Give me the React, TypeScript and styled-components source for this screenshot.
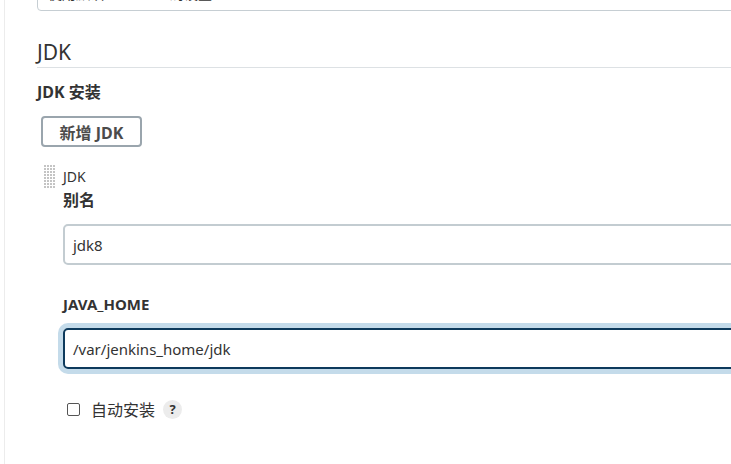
import React from "react";
import styled, { createGlobalStyle } from "styled-components";

const Global = createGlobalStyle`
  html, body { margin: 0; padding: 0; background: #fff; overflow: hidden; }
  body { font-family: "Noto Sans", "Noto Sans CJK SC", sans-serif; color: #333; }
`;

const Page = styled.div`
  width: 731px;
  height: 464px;
  overflow: hidden;
  padding-left: 4px;
  box-sizing: border-box;
`;

const Panel = styled.div`
  border-left: 1px solid #ececec;
  height: 520px;
  padding-left: 32px;
  width: 780px;
  box-sizing: border-box;
  margin-top: -29px;
`;

const TopSelect = styled.div`
  height: 40px;
  box-sizing: border-box;
  border: 1px solid #c6ced3;
  border-radius: 4px;
  padding: 0 10px;
  display: flex;
  align-items: center;
  font-size: 14px;
  line-height: 20px;
  color: #333;
  padding-top: 5px;
`;

const SectionTitle = styled.h2`
  margin: 27px 0 0;
  font-size: 21px;
  font-weight: 400;
  line-height: 28px;
  color: #333;
  padding-bottom: 1px;
  border-bottom: 1px solid #dde1e4;
`;

const FieldLabel = styled.div<{ $top: number; $size?: number }>`
  margin-top: ${(p) => p.$top}px;
  font-size: ${(p) => p.$size ?? 15}px;
  font-weight: 700;
  line-height: 20px;
  color: #333;
`;

const AddButton = styled.button`
  margin: 14px 0 0 4px;
  height: 31px;
  width: 101px;
  border: 2px solid #9aa5ad;
  border-radius: 4px;
  background: #fff;
  font-family: "Noto Sans", "Noto Sans CJK SC", sans-serif;
  font-size: 16px;
  font-weight: 700;
  color: #4b4b4b;
  padding: 0;
  display: flex;
  align-items: center;
  justify-content: center;
`;

const Repeated = styled.div`
  margin-top: 18px;
  display: flex;
  gap: 7px;
`;

const HandleIcon = styled.svg`
  width: 12px;
  height: 23px;
  margin-left: 7px;
  flex-shrink: 0;
`;

const ItemBody = styled.div`
  flex: 1;
  display: flex;
  flex-direction: column;
`;

const ItemName = styled.div`
  font-size: 14px;
  line-height: 19px;
  color: #333;
  margin-top: 2px;
`;

const TextInput = styled.div<{ $focused?: boolean; $top: number }>`
  margin-top: ${(p) => p.$top}px;
  height: 41px;
  box-sizing: border-box;
  border: 2px solid ${(p) => (p.$focused ? "#0d3a5c" : "#c3ccd1")};
  border-radius: 5px;
  box-shadow: ${(p) => (p.$focused ? "0 0 0 5px #c4dbea" : "none")};
  display: flex;
  align-items: center;
  padding-left: 8px;
  font-size: 15px;
  color: #333;
`;

const CheckRow = styled.label`
  margin-top: 30px;
  display: flex;
  align-items: center;
  height: 20px;
  font-size: 16px;
  color: #333;
  padding-left: 4px;
`;

const CheckBox = styled.span`
  width: 11px;
  height: 11px;
  border: 1px solid #555;
  border-radius: 2px;
  margin-right: 11px;
`;

const Help = styled.span`
  margin-left: 8px;
  width: 19px;
  height: 19px;
  border-radius: 50%;
  background: #ececec;
  display: flex;
  align-items: center;
  justify-content: center;
  font-size: 13px;
  font-weight: 700;
  color: #333;
`;

function DragHandle() {
  const dots: React.ReactNode[] = [];
  for (let r = 0; r < 8; r++) {
    for (let c = 0; c < 4; c++) {
      dots.push(
        <rect key={`${r}-${c}`} x={c * 3} y={r * 3} width={2} height={2} fill="#c4c4c4" />
      );
    }
  }
  return (
    <HandleIcon viewBox="0 0 12 23" aria-hidden>
      {dots}
    </HandleIcon>
  );
}

export default function App() {
  return (
    <>
      <Global />
      <Page>
        <Panel>
          <TopSelect>使用默认 maven 全局设置</TopSelect>
          <SectionTitle>JDK</SectionTitle>
          <FieldLabel $top={14} $size={16}>JDK 安装</FieldLabel>
          <AddButton>新增 JDK</AddButton>
          <Repeated>
            <DragHandle />
            <ItemBody>
              <ItemName>JDK</ItemName>
              <FieldLabel $top={4} $size={16}>别名</FieldLabel>
              <TextInput $top={14}>jdk8</TextInput>
              <FieldLabel $top={29}>JAVA_HOME</FieldLabel>
              <TextInput $focused $top={14}>/var/jenkins_home/jdk</TextInput>
              <CheckRow>
                <CheckBox />
                自动安装
                <Help>?</Help>
              </CheckRow>
            </ItemBody>
          </Repeated>
        </Panel>
      </Page>
    </>
  );
}
